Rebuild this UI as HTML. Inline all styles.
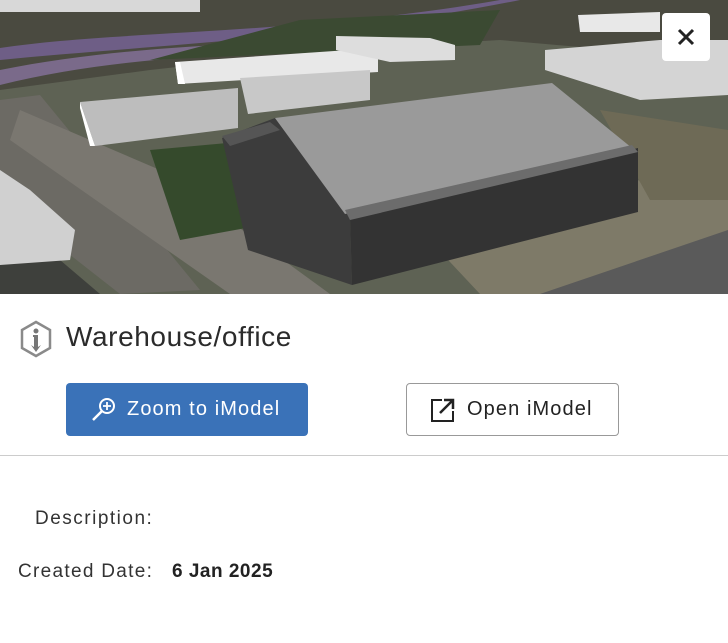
<!DOCTYPE html>
<html><head><style>
body{margin:0;width:728px;height:643px;background:#fff;font-family:"Liberation Sans","DejaVu Sans",sans-serif;position:relative;overflow:hidden;color:#2b2b2b}
.abs{position:absolute}
.btn{position:absolute;top:383px;height:53px;border-radius:4px;box-sizing:border-box;font-size:20px;display:flex;align-items:center;letter-spacing:1.1px}
</style></head><body>
<svg class="abs" style="left:0;top:0" width="728" height="294" viewBox="0 0 728 294">
<rect width="728" height="294" fill="#5e6254"/>
<polygon points="0,0 728,0 728,60 500,40 330,50 150,70 0,90" fill="#4a4a40"/>
<path d="M0,48 C120,30 300,35 500,0 L520,0 C320,40 150,45 0,60Z" fill="#6e5e86"/>
<path d="M0,70 C100,50 200,45 330,40 L340,50 C200,55 100,60 0,85Z" fill="#7a6a8a"/>
<polygon points="150,60 480,45 500,10 300,20" fill="#3b4a32"/>
<polygon points="0,100 40,95 200,290 120,294 0,200" fill="#6c6a64"/>
<polygon points="20,110 160,170 330,294 230,294 10,140" fill="#7a7770"/>
<polygon points="0,294 0,200 60,260 100,294" fill="#3e403c"/>
<polygon points="420,230 728,160 728,294 480,294" fill="#7e7a68"/>
<polygon points="540,294 728,230 728,294" fill="#5a5a5a"/>
<polygon points="600,110 728,130 728,200 650,200" fill="#6e6a56"/>
<polygon points="150,150 260,140 290,220 180,240" fill="#354a2c"/>
<polygon points="175,62 378,48 378,72 178,84" fill="#e8e8e8"/><polygon points="175,62 178,84 185,84 180,62" fill="#fff"/>
<polygon points="80,102 238,88 238,128 95,146" fill="#bdbdbd"/><polygon points="80,102 95,146 90,146 80,108" fill="#fff"/>
<polygon points="240,78 370,70 370,100 248,114" fill="#c8c8c8"/>
<polygon points="336,36 430,38 455,45 455,60 390,62 336,50" fill="#ddd"/>
<polygon points="578,15 660,12 660,32 580,32" fill="#e8e8e8"/>
<polygon points="545,50 660,40 728,40 728,95 640,100 545,70" fill="#d4d4d4"/>
<polygon points="0,170 30,190 75,230 70,260 0,265" fill="#d0d0d0"/>
<polygon points="0,0 200,0 200,12 0,12" fill="#d8d8d8"/>
<polygon points="222,138 275,118 350,218 352,285 248,250" fill="#3c3c3c"/>
<polygon points="350,218 638,148 638,212 352,285" fill="#333"/>
<polygon points="275,118 552,83 632,148 345,214" fill="#9a9a9a"/>
<polygon points="345,210 632,145 638,152 350,220" fill="#6c6c6c"/>
<polygon points="222,136 270,122 280,130 230,146" fill="#555"/>
</svg>
<div class="abs" style="left:662px;top:13px;width:48px;height:48px;background:#fff;border-radius:4px;display:flex;align-items:center;justify-content:center">
<svg width="20" height="20" viewBox="0 0 20 20"><path d="M3 3L17 17M17 3L3 17" stroke="#222" stroke-width="3"/></svg></div>
<svg class="abs" style="left:18px;top:320px" width="36" height="38" viewBox="0 0 36 38">
<path d="M18 2L32 10V28L18 36L4 28V10Z" fill="none" stroke="#8a8a8a" stroke-width="2.5"/>
<circle cx="18" cy="11" r="2.5" fill="#777"/><path d="M15 15H20V27L23 25L18 32L13 25L16 27V17H15Z" fill="#777"/></svg>
<div class="abs" style="left:66px;top:321px;font-size:28px;color:#2b2b2b;letter-spacing:0.6px">Warehouse/office</div>
<div class="btn" style="left:66px;width:242px;background:#3a72b8;color:#fff;padding-left:24px">
<svg width="28" height="28" viewBox="0 0 28 28" style="margin-right:9px"><circle cx="17" cy="10" r="7" fill="none" stroke="#fff" stroke-width="2"/><path d="M12 15L3 24" stroke="#fff" stroke-width="2.5"/><path d="M17 6V14M13 10H21" stroke="#fff" stroke-width="1.8"/></svg>Zoom to iModel</div>
<div class="btn" style="left:406px;width:213px;border:1px solid #999;color:#222;padding-left:23px">
<svg width="26" height="26" viewBox="0 0 26 26" style="margin-right:11px"><path d="M12 3H2V24H23V14" fill="none" stroke="#222" stroke-width="2"/><path d="M10 16L22 4M14 3H23V12" fill="none" stroke="#222" stroke-width="2.5"/></svg>Open iModel</div>
<div class="abs" style="left:0;top:455px;width:728px;height:1px;background:#ccc"></div>
<div class="abs" style="left:35px;top:508px;font-size:19px;color:#333;letter-spacing:1.5px">Description:</div>
<div class="abs" style="left:18px;top:561px;font-size:19px;color:#333;letter-spacing:1.3px">Created Date:</div>
<div class="abs" style="left:172px;top:561px;font-size:19px;font-weight:bold;color:#222;letter-spacing:0.5px">6 Jan 2025</div>
</body></html>
